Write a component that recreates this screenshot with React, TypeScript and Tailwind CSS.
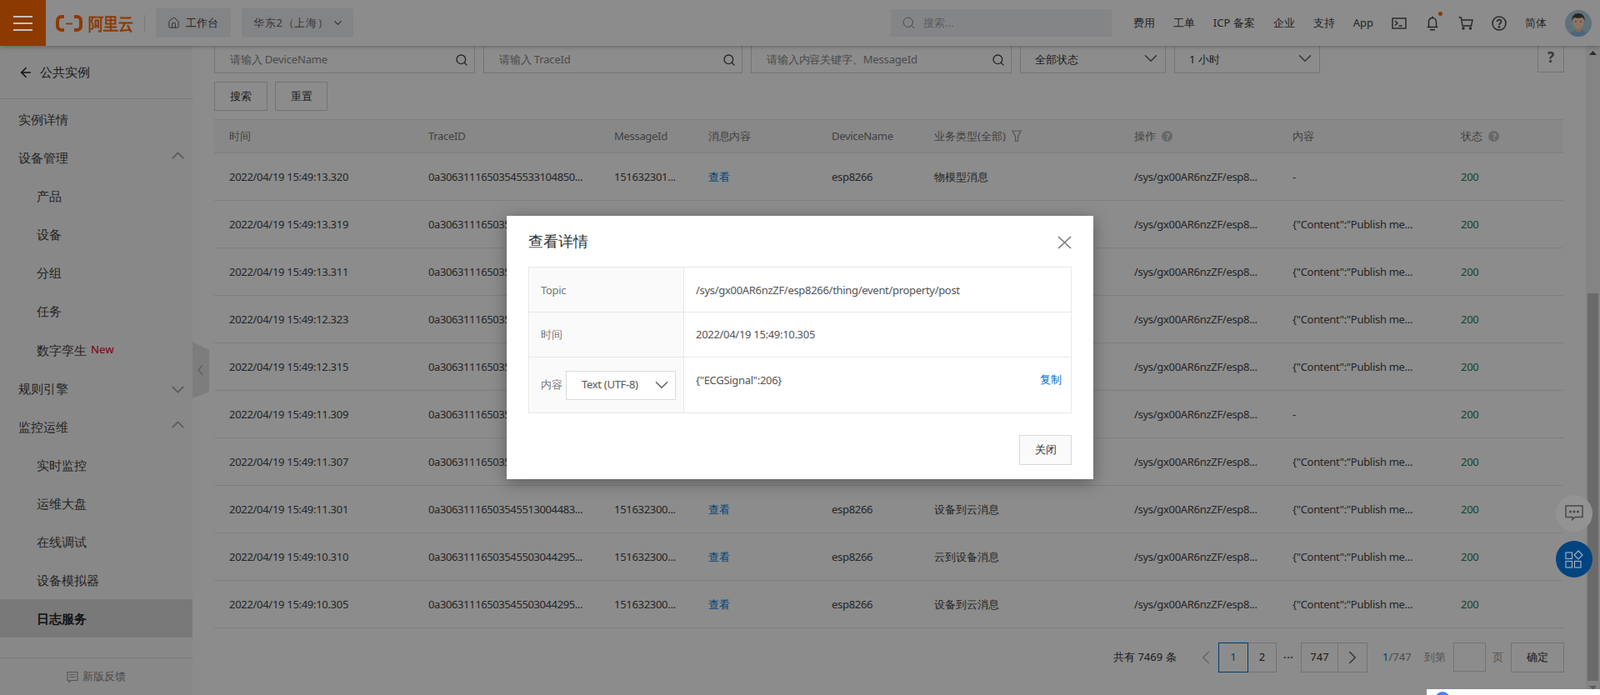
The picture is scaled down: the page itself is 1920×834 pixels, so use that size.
import React from "react";
import { Search, ChevronDown, ChevronUp, ChevronLeft, ChevronRight, ArrowLeft, Home } from "lucide-react";

const font = "font-['Roboto','Noto_Sans_CJK_SC',sans-serif]";

const rows = [
  ["2022/04/19 15:49:13.320", "0a30631116503545533104850...", "151632301...", "物模型消息", "-"],
  ["2022/04/19 15:49:13.319", "0a30631116503545533104849...", "151632301...", "设备到云消息", '{"Content":"Publish me...'],
  ["2022/04/19 15:49:13.311", "0a30631116503545533044848...", "151632301...", "设备到云消息", '{"Content":"Publish me...'],
  ["2022/04/19 15:49:12.323", "0a30631116503545523144847...", "151632301...", "设备到云消息", '{"Content":"Publish me...'],
  ["2022/04/19 15:49:12.315", "0a30631116503545523044846...", "151632301...", "设备到云消息", '{"Content":"Publish me...'],
  ["2022/04/19 15:49:11.309", "0a30631116503545513044845...", "151632300...", "物模型消息", "-"],
  ["2022/04/19 15:49:11.307", "0a30631116503545513004484...", "151632300...", "云到设备消息", '{"Content":"Publish me...'],
  ["2022/04/19 15:49:11.301", "0a30631116503545513004483...", "151632300...", "设备到云消息", '{"Content":"Publish me...'],
  ["2022/04/19 15:49:10.310", "0a30631116503545503044295...", "151632300...", "云到设备消息", '{"Content":"Publish me...'],
  ["2022/04/19 15:49:10.305", "0a30631116503545503044295...", "151632300...", "设备到云消息", '{"Content":"Publish me...'],
];

const cols = "grid grid-cols-[239px_223px_113px_148px_123px_240px_190px_202px_141px]";

function Hint() {
  return (
    <span className="ml-[8px] inline-flex h-[13px] w-[13px] items-center justify-center rounded-full bg-[#bdbdbd] text-[10px] font-bold leading-none text-white">
      ?
    </span>
  );
}

function MenuRow({ label, sub, active, up, down, badge }: { label: string; sub?: boolean; active?: boolean; up?: boolean; down?: boolean; badge?: boolean }) {
  return (
    <div className={`relative flex h-[46px] items-center text-[15px] ${sub ? "pl-[44px]" : "pl-[22px]"} ${active ? "bg-[#dcdcdc] font-bold text-[#222]" : "text-[#444]"}`}>
      {label}
      {badge && <span className="ml-[5px] text-[13px] font-medium text-[#e8173a]">New</span>}
      {up && <ChevronUp size={25} strokeWidth={1.8} className="absolute left-[201px] top-[8px] text-[#aaa]" />}
      {down && <ChevronDown size={25} strokeWidth={1.8} className="absolute left-[201px] top-[12px] text-[#aaa]" />}
    </div>
  );
}

function FilterInput({ left, width, text }: { left: string; width: string; text: string }) {
  return (
    <div className={`absolute top-[53px] flex h-[35px] items-center justify-between border border-[#d4d4d4] pl-[18px] pr-[7px] pt-[3px] text-[13px] tracking-[-0.15px] text-[#888] ${left} ${width}`}>
      <span>{text}</span>
      <Search size={16} strokeWidth={2} className="text-[#444]" />
    </div>
  );
}

function FilterSelect({ left, width, text }: { left: string; width: string; text: string }) {
  return (
    <div className={`absolute top-[53px] flex h-[35px] items-center justify-between border border-[#d4d4d4] pl-[17px] pr-[4px] pt-[3px] text-[13px] text-[#333] ${left} ${width}`}>
      <span>{text}</span>
      <ChevronDown size={26} strokeWidth={1.5} className="mt-[-5px] text-[#666]" />
    </div>
  );
}

export default function App() {
  return (
    <div className={`relative h-[834px] w-[1920px] overflow-hidden bg-white ${font}`}>
      {/* Sidebar */}
      <aside className="absolute bottom-0 left-0 top-[55px] w-[231px] bg-[#f7f7f7]">
        <div className="flex h-[64px] items-center gap-[8px] border-b border-[#dcdcdc] pl-[22px] text-[15px] text-[#333]">
          <ArrowLeft size={18} strokeWidth={2.2} className="text-[#222]" />
          公共实例
        </div>
        <div className="pt-[1px]">
          <MenuRow label="实例详情" />
          <MenuRow label="设备管理" up />
          <MenuRow label="产品" sub />
          <MenuRow label="设备" sub />
          <MenuRow label="分组" sub />
          <MenuRow label="任务" sub />
          <div className="h-[1px]" />
          <MenuRow label="数字孪生" sub badge />
          <MenuRow label="规则引擎" down />
          <MenuRow label="监控运维" up />
          <MenuRow label="实时监控" sub />
          <MenuRow label="运维大盘" sub />
          <MenuRow label="在线调试" sub />
          <MenuRow label="设备模拟器" sub />
          <MenuRow label="日志服务" sub active />
        </div>
        <div className="absolute bottom-0 left-0 flex h-[45px] w-full items-center justify-center gap-[5px] border-t border-[#dcdcdc] text-[13px] text-[#888]">
          <svg width="14" height="15" viewBox="0 0 14 15" fill="none" stroke="#999" strokeWidth="1.1">
            <path d="M1 1.5h12v10H5l-2 2v-2H1z" />
            <path d="M3.5 4.5h7M3.5 7.5h7" />
          </svg>
          新版反馈
        </div>
      </aside>

      {/* Collapse tab */}
      <svg className="absolute left-[231px] top-[410px]" width="20" height="68" viewBox="0 0 20 68">
        <polygon points="0,0 20,10 20,60 0,68" fill="#e4e4e4" />
        <path d="M12 28l-5 6 5 6" fill="none" stroke="#b4b4b4" strokeWidth="1.6" />
      </svg>

      {/* Filters */}
      <FilterInput left="left-[257px]" width="w-[313px]" text="请输入 DeviceName" />
      <FilterInput left="left-[580px]" width="w-[311px]" text="请输入 TraceId" />
      <FilterInput left="left-[901px]" width="w-[313px]" text="请输入内容关键字、MessageId" />
      <FilterSelect left="left-[1224px]" width="w-[175px]" text="全部状态" />
      <FilterSelect left="left-[1409px]" width="w-[175px]" text="1 小时" />
      <div className="absolute left-[1845px] top-[53px] flex h-[34px] w-[32px] items-center justify-center border border-[#d4d4d4] pb-[3px] text-[17px] font-bold text-[#666]">?</div>

      <div className="absolute left-[257px] top-[98px] flex gap-[9px] text-[13px] text-[#333]">
        <div className="flex h-[35px] w-[64px] items-center justify-center border border-[#d4d4d4]">搜索</div>
        <div className="flex h-[35px] w-[63px] items-center justify-center border border-[#d4d4d4]">重置</div>
      </div>

      {/* Table */}
      <div className="absolute left-[257px] top-[143px] w-[1619px] text-[13px] tracking-[-0.3px]">
        <div className={`${cols} h-[41px] items-center border-y border-[#e8e8e8] bg-[#f8f8f8] text-[#777]`}>
          <div className="pl-[18px]">时间</div>
          <div className="pl-[18px]">TraceID</div>
          <div className="pl-[18px]">MessageId</div>
          <div className="pl-[18px]">消息内容</div>
          <div className="pl-[18px]">DeviceName</div>
          <div className="flex items-center pl-[18px]">
            <span className="tracking-[0px]">业务类型(全部)</span>
            <svg className="ml-[7px]" width="12" height="15" viewBox="0 0 12 15" fill="none" stroke="#999" strokeWidth="1.2">
              <path d="M1 1h10L7.5 8v5.500h-3V8z" />
            </svg>
          </div>
          <div className="flex items-center pl-[18px]">操作<Hint /></div>
          <div className="pl-[18px]">内容</div>
          <div className="flex items-center pl-[18px]">状态<Hint /></div>
        </div>
        {rows.map((r) => (
          <div key={r[0]} className={`${cols} h-[57px] items-center border-b border-[#e8e8e8] pt-[1px] text-[#444]`}>
            <div className="pl-[18px]">{r[0]}</div>
            <div className="pl-[18px] tracking-[-0.4px]">{r[1]}</div>
            <div className="pl-[18px]">{r[2]}</div>
            <div className="pl-[18px] text-[#0080e0]">查看</div>
            <div className="pl-[18px]">esp8266</div>
            <div className="pl-[18px] tracking-[0px]">{r[3]}</div>
            <div className="pl-[18px]">/sys/gx00AR6nzZF/esp8...</div>
            <div className="pl-[18px]">{r[4]}</div>
            <div className="pl-[18px] text-[#1e8050]">200</div>
          </div>
        ))}
      </div>

      {/* Pagination */}
      <div className="absolute left-0 top-[771px] h-[36px] w-full text-[13px] text-[#333]">
        <span className="absolute left-[1336px] top-[8px]">共有 7469 条</span>
        <ChevronLeft size={26} strokeWidth={1.4} className="absolute left-[1434px] top-[5px] text-[#bbb]" />
        <div className="absolute left-[1462px] top-0 z-[1] flex h-[36px] w-[36px] items-center justify-center border border-[#0070cc] text-[#0070cc]">1</div>
        <div className="absolute left-[1497px] top-0 flex h-[36px] w-[35px] items-center justify-center border border-[#d4d4d4]">2</div>
        <span className="absolute left-[1540px] top-[5px] text-[13px] font-bold tracking-[0.5px] text-[#666]">...</span>
        <div className="absolute left-[1561px] top-0 flex h-[36px] w-[45px] items-center justify-center border border-[#d4d4d4]">747</div>
        <div className="absolute left-[1605px] top-0 flex h-[36px] w-[36px] items-center justify-center border border-[#d4d4d4]">
          <ChevronRight size={26} strokeWidth={1.4} className="text-[#666]" />
        </div>
        <span className="absolute left-[1659px] top-[8px] text-[#888]"><span className="text-[#0070cc]">1</span>/747</span>
        <span className="absolute left-[1709px] top-[8px] text-[#999]">到第</span>
        <div className="absolute left-[1744px] top-0 h-[35px] w-[39px] border border-[#d4d4d4]" />
        <span className="absolute left-[1791px] top-[8px] text-[#999]">页</span>
        <div className="absolute left-[1813px] top-0 flex h-[36px] w-[64px] items-center justify-center border border-[#d4d4d4]">确定</div>
      </div>

      {/* Page scrollbar */}
      <div className="absolute bottom-0 right-0 top-[55px] w-[17px] bg-[#f1f1f1]">
        <div className="absolute left-[2px] top-[297px] h-[465px] w-[13px] bg-[#c1c1c1]" />
        <svg className="absolute left-[4px] top-[6px]" width="9" height="5" viewBox="0 0 9 5"><polygon points="4.5,0 9,5 0,5" fill="#505050" /></svg>
        <svg className="absolute bottom-[6px] left-[4px]" width="9" height="5" viewBox="0 0 9 5"><polygon points="0,0 9,0 4.5,5" fill="#a3a3a3" /></svg>
      </div>

      {/* Top bar */}
      <header className="absolute left-0 top-0 flex h-[55px] w-full items-center bg-white text-[13px] text-[#444] shadow-[0_1px_5px_rgba(0,0,0,0.3)]">
        <div className="h-[55px] w-[55px] bg-[#ff6a00]" />
        <svg className="ml-[12px]" width="33" height="20" viewBox="0 0 33 20" fill="none" stroke="#ff6a00" strokeWidth="4">
          <path d="M10 2H7C4 2 2 4 2 7v6c0 3 2 5 5 5h3" />
          <path d="M22 2h3c3 0 5 2 5 5v6c0 3-2 5-5 5h-3" />
          <path d="M12 10.500h8" strokeWidth="1.800" />
        </svg>
        <span className="ml-[6px] w-[54px] origin-center scale-y-[1.15] whitespace-nowrap text-[18px] font-black leading-none text-[#ff6a00]">阿里云</span>
        <div className="ml-[13px] h-[20px] w-px bg-[#dcdcdc]" />
        <div className="ml-[13px] flex h-[35px] w-[90px] items-center rounded-[2px] bg-[#eef1f5] pl-[14px]">
          <Home size={15} strokeWidth={1.6} className="mr-[7px] text-[#555]" />
          工作台
        </div>
        <div className="ml-[13px] flex h-[35px] w-[134px] items-center rounded-[2px] bg-[#eef1f5] pl-[14px]">
          <span className="tracking-[0.7px] text-[#666]">华东2（上海）</span>
          <ChevronDown size={15} strokeWidth={1.8} className="ml-[4px] text-[#555]" />
        </div>
        <div className="absolute left-[1069px] top-[11px] flex h-[33px] w-[265px] items-center rounded-[2px] bg-[#f0f2f6] pl-[13px] text-[#aaa]">
          <Search size={17} strokeWidth={1.4} className="mr-[9px] text-[#888]" />
          搜索...
        </div>
        <nav className="absolute right-[10px] top-0 flex h-[55px] items-center gap-[22px]">
          <span>费用</span>
          <span>工单</span>
          <span>ICP 备案</span>
          <span>企业</span>
          <span>支持</span>
          <span>App</span>
          <svg width="18" height="14" viewBox="0 0 18 14" fill="none" stroke="#444" strokeWidth="1.4">
            <rect x="1" y="1" width="16" height="12" />
            <path d="M4 4l3 2.700-3 2.700M8.500 10h4" />
          </svg>
          <span className="relative ml-[2px]">
            <svg className="block" width="14" height="18" viewBox="0 0 14 18" fill="none" stroke="#444" strokeWidth="1.4">
              <path d="M7 .5v1.800M2.500 13V7.500C2.500 4.500 4.300 2.500 7 2.500s4.500 2 4.500 5V13M.7 13.500h12.600M4 16.800h6" />
            </svg>
            <span className="absolute left-[14px] top-[-5px] h-[5px] w-[5px] rounded-full bg-[#ff6a00]" />
          </span>
          <svg className="ml-[2px]" width="18" height="16" viewBox="0 0 18 16" fill="none" stroke="#444" strokeWidth="1.4">
            <path d="M.5 1h2.800L5 11h10.500L17 4H4" />
            <circle cx="6" cy="14" r="1" fill="#444" />
            <circle cx="14.500" cy="14" r="1" fill="#444" />
          </svg>
          <svg width="18" height="18" viewBox="0 0 18 18" fill="none" stroke="#444" strokeWidth="1.5">
            <circle cx="9" cy="9" r="8" />
            <path d="M6.500 7C6.500 5.500 7.600 4.700 9 4.700s2.500.9 2.500 2.200c0 2-2.500 2-2.500 4" strokeWidth="1.7" />
            <circle cx="9" cy="13.300" r=".6" fill="#444" />
          </svg>
          <span>简体</span>
          <svg width="32" height="32" viewBox="0 0 32 32">
            <defs><clipPath id="av"><circle cx="16" cy="16" r="16" /></clipPath></defs>
            <g clipPath="url(#av)">
              <rect width="32" height="32" fill="#adcfe0" />
              <path d="M5 32c1-6 6-8 11-8s10 2 11 8z" fill="#8bbcdc" />
              <rect x="13" y="19" width="6" height="7" fill="#f0c2a0" />
              <ellipse cx="16" cy="14" rx="7" ry="9" fill="#ffd5b8" />
              <path d="M8.500 14c-1-7 3-10 7.500-10s8.500 3 7.500 10c-.5-3-1.500-4.500-3-5-3 1-7 1-9 0-1.500 1-2.500 2-3 5z" fill="#4c423c" />
              <circle cx="13" cy="14" r=".8" fill="#443" />
              <circle cx="19" cy="14" r=".8" fill="#443" />
            </g>
          </svg>
        </nav>
      </header>

      {/* Mask */}
      <div className="absolute inset-0 z-20 bg-black/45" />

      {/* Elements above the mask */}
      <div className="absolute left-0 top-0 z-30 flex h-[55px] w-[55px] flex-col items-center justify-center gap-[6px]">
        <div className="h-[2px] w-[23px] bg-[#c9c0b8]" />
        <div className="h-[2px] w-[23px] bg-[#c9c0b8]" />
        <div className="h-[2px] w-[23px] bg-[#c9c0b8]" />
      </div>
      <div className="absolute left-[1867px] top-[594px] z-30 flex h-[44px] w-[44px] items-center justify-center rounded-full bg-[#939393]">
        <svg width="22" height="20" viewBox="0 0 22 20" fill="none" stroke="#4a4a4a" strokeWidth="1.5">
          <path d="M1 1h20v13.500h-9l-3 3v-3H1z" />
          <circle cx="6.500" cy="8" r=".8" fill="#4a4a4a" />
          <circle cx="11" cy="8" r=".8" fill="#4a4a4a" />
          <circle cx="15.500" cy="8" r=".8" fill="#4a4a4a" />
        </svg>
      </div>
      <div className="absolute left-[1867px] top-[649px] z-30 flex h-[44px] w-[44px] items-center justify-center rounded-full bg-[#014480]">
        <svg width="22" height="22" viewBox="0 0 22 22" fill="none" stroke="#a9b6c4" strokeWidth="1.1">
          <rect x="1" y="3" width="7.500" height="7.500" />
          <rect x="1" y="13.500" width="7.500" height="7.500" />
          <rect x="11.500" y="13.500" width="7.500" height="7.500" />
          <path d="M16 1l5 5-5 5-5-5z" />
        </svg>
      </div>
      <div className="absolute bottom-0 left-[1712px] z-30 h-[7px] w-[208px] overflow-hidden bg-white">
        <div className="absolute left-[10px] top-[3px] h-[18px] w-[18px] rounded-full bg-[#4a80ea]" />
      </div>

      {/* Modal */}
      <div className="absolute left-[608px] top-[259px] z-40 h-[316px] w-[704px] bg-white shadow-[0_4px_18px_rgba(0,0,0,0.35)]">
        <div className="absolute left-[26px] top-[18px] text-[18px] leading-[24px] text-[#333]">查看详情</div>
        <svg className="absolute left-[661px] top-[24px]" width="17" height="16" viewBox="0 0 17 16" stroke="#777" strokeWidth="1.6" fill="none">
          <path d="M1 1l15 14M16 1L1 15" />
        </svg>
        <div className="absolute left-[26px] top-[61px] grid w-[652px] grid-cols-[186px_1fr] grid-rows-[54px_54px_66px] border border-[#e8e8e8] text-[13px] tracking-[-0.3px] text-[#555]">
          <div className="flex items-center border-b border-r border-[#e8e8e8] bg-[#fafafa] pl-[14px] pt-[2px] text-[#777]">Topic</div>
          <div className="flex items-center border-b border-[#e8e8e8] pl-[14px] pt-[2px]">/sys/gx00AR6nzZF/esp8266/thing/event/property/post</div>
          <div className="flex items-center border-b border-r border-[#e8e8e8] bg-[#fafafa] pl-[14px] text-[#777]">时间</div>
          <div className="flex items-center border-b border-[#e8e8e8] pl-[14px]">2022/04/19 15:49:10.305</div>
          <div className="flex items-center border-r border-[#e8e8e8] bg-[#fafafa] pl-[14px] text-[#777]">
            <span className="tracking-[0px]">内容</span>
            <div className="ml-[4px] flex h-[35px] w-[132px] items-center justify-between border border-[#dcdcdc] bg-white pl-[18px] pr-[3px] text-[#555]">
              Text (UTF-8)
              <ChevronDown size={26} strokeWidth={1.5} className="text-[#666]" />
            </div>
          </div>
          <div className="relative pl-[14px] pt-[17px] leading-[20px]">
            {'{"ECGSignal":206}'}
            <span className="absolute right-[11px] top-[16px] tracking-[0px] text-[#0070cc]">复制</span>
          </div>
        </div>
        <div className="absolute left-[615px] top-[263px] flex h-[36px] w-[63px] items-center justify-center border border-[#d9d9d9] bg-[#fafafa] text-[13px] text-[#333]">关闭</div>
      </div>
    </div>
  );
}
